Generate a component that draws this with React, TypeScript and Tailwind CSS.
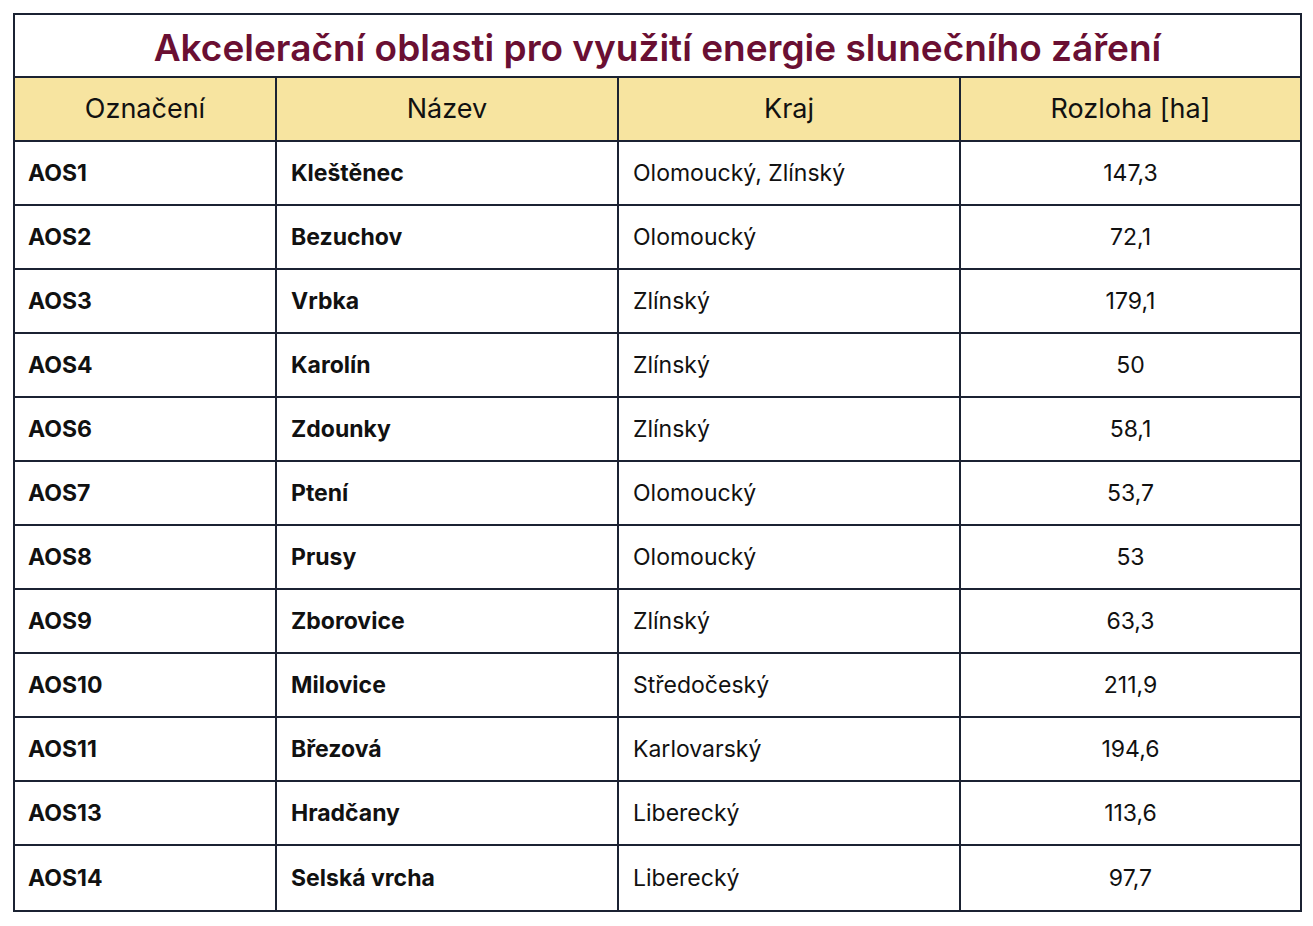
const rows: [string, string, string, string][] = [
  ["AOS1", "Kleštěnec", "Olomoucký, Zlínský", "147,3"],
  ["AOS2", "Bezuchov", "Olomoucký", "72,1"],
  ["AOS3", "Vrbka", "Zlínský", "179,1"],
  ["AOS4", "Karolín", "Zlínský", "50"],
  ["AOS6", "Zdounky", "Zlínský", "58,1"],
  ["AOS7", "Ptení", "Olomoucký", "53,7"],
  ["AOS8", "Prusy", "Olomoucký", "53"],
  ["AOS9", "Zborovice", "Zlínský", "63,3"],
  ["AOS10", "Milovice", "Středočeský", "211,9"],
  ["AOS11", "Březová", "Karlovarský", "194,6"],
  ["AOS13", "Hradčany", "Liberecký", "113,6"],
  ["AOS14", "Selská vrcha", "Liberecký", "97,7"],
];

const grid = "grid grid-cols-[260px_342px_342px_1fr]";

export default function App() {
  return (
    <div className="min-h-[926px] bg-white pt-[13px] pl-[13px] font-['Inter',sans-serif] text-[#111111]">
      <div className="w-[1289px] border-2 border-[#1b2232]">
        <div className="h-[63px] pt-[3px] border-b-2 border-[#1b2232] flex items-center justify-center">
          <h1 className="text-[37px] font-semibold text-[#6a0f33] leading-none">
            Akcelerační oblasti pro využití energie slunečního záření
          </h1>
        </div>
        <div className={`${grid} h-[64px] bg-[#f7e4a0] border-b-2 border-[#1b2232] text-[27px]`}>
          <div className="flex items-center justify-center">Označení</div>
          <div className="flex items-center justify-center border-l-2 border-[#1b2232]">Název</div>
          <div className="flex items-center justify-center border-l-2 border-[#1b2232]">Kraj</div>
          <div className="flex items-center justify-center border-l-2 border-[#1b2232]">Rozloha [ha]</div>
        </div>
        {rows.map((r, i) => (
          <div
            key={r[0]}
            className={`${grid} h-[64px] text-[23px] ${i < rows.length - 1 ? "border-b-2 border-[#1b2232]" : "h-[62px]"}`}
          >
            <div className="flex items-center pl-[13px] font-bold">{r[0]}</div>
            <div className="flex items-center pl-[14px] font-bold border-l-2 border-[#1b2232]">{r[1]}</div>
            <div className="flex items-center pl-[14px] border-l-2 border-[#1b2232]">{r[2]}</div>
            <div className="flex items-center justify-center border-l-2 border-[#1b2232]">{r[3]}</div>
          </div>
        ))}
      </div>
    </div>
  );
}
